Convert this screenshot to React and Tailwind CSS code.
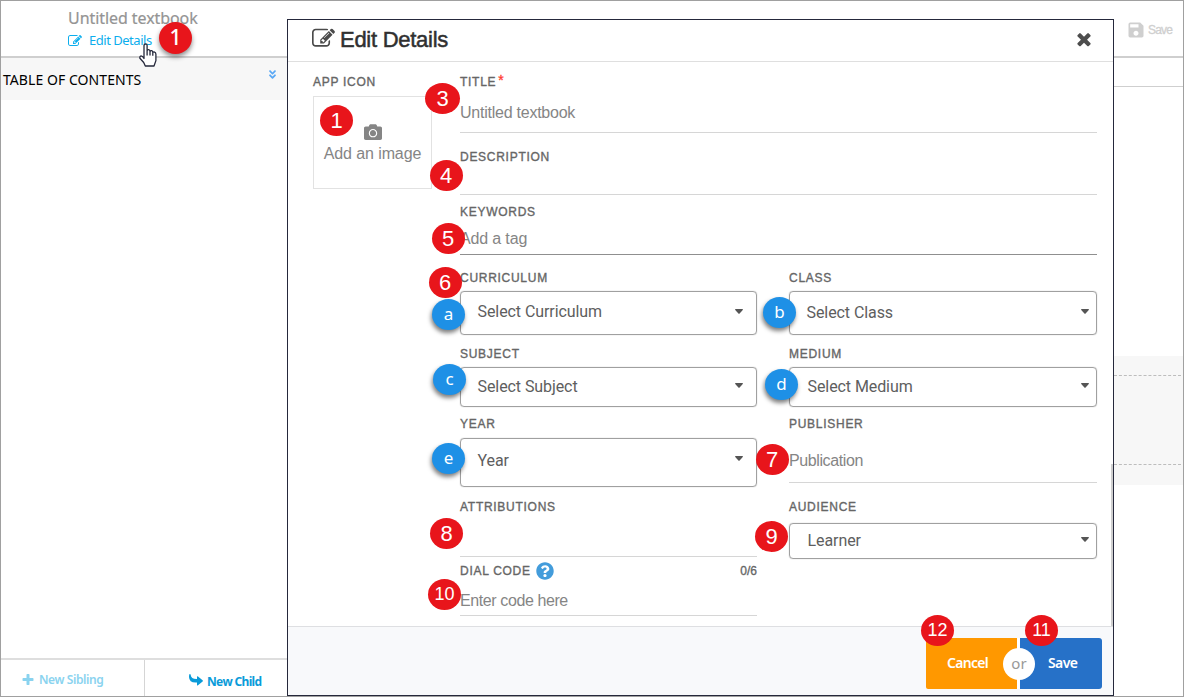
import React from "react";
import { FaCamera, FaQuestionCircle, FaAngleDoubleDown } from "react-icons/fa";
import { MdSave } from "react-icons/md";

const ARIAL = "font-['Liberation_Sans',Arial,sans-serif]";
const ROBOTO = "font-['Roboto',sans-serif]";
const NOTO = "font-['Noto_Sans',sans-serif]";

function Fa({ d, className }) {
  return (
    <svg viewBox="0 0 1792 1792" fill="currentColor" className={className}>
      <path d={d} />
    </svg>
  );
}

const EDIT =
  "M888 1184l116-116-152-152-116 116v56h96v96h56zm440-720q-16-16-33 1l-350 350q-17 17-1 33t33-1l350-350q17-17 1-33zm80 594v190q0 119-84.5 203.5t-203.5 84.5h-832q-119 0-203.5-84.5t-84.5-203.5v-832q0-119 84.5-203.5t203.5-84.5h832q63 0 117 25 15 7 18 23 3 17-9 29l-49 49q-14 14-32 8-23-6-45-6h-832q-66 0-113 47t-47 113v832q0 66 47 113t113 47h832q66 0 113-47t47-113v-126q0-13 9-22l64-64q15-15 35-7t20 29zm-96-738l288 288-672 672h-288v-288zm444 132l-92 92-288-288 92-92q28-28 68-28t68 28l152 152q28 28 28 68t-28 68z";
const TIMES =
  "M1490 1322q0 40-28 68l-136 136q-28 28-68 28t-68-28l-294-294-294 294q-28 28-68 28t-68-28l-136-136q-28-28-28-68t28-68l294-294-294-294q-28-28-28-68t28-68l136-136q28-28 68-28t68 28l294 294 294-294q28-28 68-28t68 28l136 136q28 28 28 68t-28 68l-294 294 294 294q28 28 28 68z";
const PLUS =
  "M1600 736v192q0 40-28 68t-68 28h-416v416q0 40-28 68t-68 28h-192q-40 0-68-28t-28-68v-416h-416q-40 0-68-28t-28-68v-192q0-40 28-68t68-28h416v-416q0-40 28-68t68-28h192q40 0 68 28t28 68v416h416q40 0 68 28t28 68z";

function Label({ children, className = "tracking-[0.72px]" }) {
  return (
    <div className={`flex h-4 shrink-0 items-center whitespace-nowrap text-[12px] text-[#666] [-webkit-text-stroke:0.35px_#666] ${ARIAL} ${className}`}>
      {children}
    </div>
  );
}

function LineField({ label, labelClass, className, line = "border-[#d6d6d6]", text, textClass = "" }) {
  return (
    <div className={`flex flex-col border-b ${line} ${className}`}>
      <Label className={labelClass}>{label}</Label>
      {text && (
        <div className={`whitespace-nowrap text-[16px] leading-5 text-[#858585] ${ARIAL} ${textClass}`}>{text}</div>
      )}
    </div>
  );
}

function SelectField({ label, labelClass, className, boxClass, value, valueClass = "", caretClass = "" }) {
  return (
    <div className={className}>
      <Label className={labelClass}>{label}</Label>
      <div className={`flex justify-between rounded-[4px] border border-[#a0a0a0] pl-[16.5px] shadow-[0_0_1px_#a0a0a0] ${boxClass}`}>
        <span className={`whitespace-nowrap text-[16px] leading-5 tracking-[-0.08px] text-[#5e5e5e] ${ROBOTO} ${valueClass}`}>{value}</span>
        <svg viewBox="0 0 8 5" className={`h-[5px] w-2 fill-[#555] ${caretClass}`}>
          <path d="M0 .8Q0 0 .8 0H7.2Q8 0 8 .8L4.6 4.6Q4 5 3.4 4.6Z" />
        </svg>
      </div>
    </div>
  );
}

function Badge({ children, className }) {
  return (
    <div className={`absolute flex h-[31px] w-[33px] items-center justify-center rounded-[50%] bg-[#e8151b] text-white ${ARIAL} ${className}`}>
      {children}
    </div>
  );
}

function BlueBadge({ children, className }) {
  return (
    <div className={`absolute flex h-[31px] w-[33px] items-center justify-center rounded-[50%] bg-[#1e90e6] pb-0.5 text-[17px] text-white shadow-[-1px_3px_4px_rgba(0,0,0,0.5)] ${NOTO} ${className}`}>
      {children}
    </div>
  );
}

function Sidebar() {
  return (
    <aside className={`flex w-[286px] shrink-0 flex-col ${NOTO}`}>
      <div className="h-[55px] pl-[67px] pt-[6px]">
        <div className="whitespace-nowrap text-[16px] leading-[22px] tracking-[-0.07px] text-[#949494] [-webkit-text-stroke:0.2px_#949494]">Untitled textbook</div>
        <div className="mt-[2px] flex h-5 items-center text-[#0caeed]">
          <Fa d={EDIT} className="size-[14px]" />
          <span className="ml-[7px] text-[13px] tracking-[-0.48px]">Edit Details</span>
        </div>
      </div>
      <div className="flex h-[44px] justify-between border-t-2 border-[#cfcfcf] bg-[#f7f7f7] pl-[2px] pr-[9px]">
        <span className="mt-[11px] text-[14px] leading-[22px] tracking-[0.06px] text-black">TABLE OF CONTENTS</span>
        <FaAngleDoubleDown className="mt-[11px] size-[11px] text-[#5aa8f5]" />
      </div>
      <div className="flex-1" />
      <div className="flex h-[38px] border-t-2 border-[#dedede] text-[12px] font-semibold">
        <div className="flex w-[144px] items-center border-r border-[#d5d5d5] pl-[20px] pt-[3px] text-[#8ad3ef]">
          <Fa d={PLUS} className="size-[14px]" />
          <span className="ml-[4px] whitespace-nowrap tracking-[-0.4px]">New Sibling</span>
        </div>
        <div className="flex flex-1 items-center pl-[44px] pt-[7px] text-[#0a9bd9]">
          <svg viewBox="0 0 14 12" className="mb-1 h-3 w-[14px] fill-current">
            <path d="M.4.3Q1-.4 1.6.5Q2 5.2 8 5V2.6Q8.2 1.8 9 2.4L13.6 6.3Q14.2 6.9 13.6 7.5L9 11.3Q8.2 11.9 8 11V8.5Q.2 9.2 0 3Q0 1.2.4.3Z" />
          </svg>
          <span className="ml-[4px] whitespace-nowrap font-bold tracking-[-0.65px]">New Child</span>
        </div>
      </div>
    </aside>
  );
}

function Modal() {
  return (
    <section className="mt-[18px] flex h-[677px] w-[827px] shrink-0 flex-col border border-[#25283b] bg-white">
      <header className="flex h-[42px] items-center justify-between border-b border-[#dfdfdf] pl-6 pr-[19px] text-[#303030]">
        <div className="flex items-center">
          <Fa d={EDIT} className="mb-[4px] size-[23px] text-[#4a4a4a]" />
          <h1 className={`ml-[5px] mb-[3px] whitespace-nowrap text-[22px] tracking-[-0.27px] [-webkit-text-stroke:0.5px_#303030] ${ARIAL}`}>Edit Details</h1>
        </div>
        <Fa d={TIMES} className="mb-[4px] size-[20px] text-[#4d4d4d]" />
      </header>

      <div className="relative flex h-[564px] pl-[25px] pt-[12px]">
        <div className="w-[119px]">
          <Label>APP ICON</Label>
          <div className="mt-[6px] flex h-[93px] flex-col items-center border border-[#e2e2e2] pt-[26px] text-[#858585]">
            <FaCamera className="size-[18px]" />
            <span className={`mt-[3px] whitespace-nowrap text-[16px] leading-5 tracking-[-0.1px] ${ARIAL}`}>Add an image</span>
          </div>
        </div>

        <div className="ml-[28px] w-[637px]">
          <LineField className="h-[59px]" label={<>TITLE<span className="mb-1 ml-[2px] text-[14px] text-[#ff3b30] [-webkit-text-stroke:0.3px_#ff3b30]">*</span></>} text="Untitled textbook" textClass="mt-[13px] tracking-[-0.24px]" />
          <LineField className="mt-4 h-[46px]" label="DESCRIPTION" />
          <LineField className="mt-[9px] h-[51px]" line="border-[#8f8f8f]" label="KEYWORDS" text="Add a tag" textClass="mt-[9px] tracking-[-0.15px]" />

          <div className="mt-[15px] flex gap-8">
            <div className="w-[297px]">
              <SelectField className="h-[65px]" label="CURRICULUM" boxClass="mt-[5px] h-[44px] pr-[13px]" value="Select Curriculum" valueClass="mt-[10px]" caretClass="mt-[17px]" />
              <SelectField className="mt-[11px] h-[61px]" label="SUBJECT" boxClass="mt-[5px] h-[40px] pr-[13px]" value="Select Subject" valueClass="mt-[9px]" caretClass="mt-[15px]" />
              <SelectField className="mt-[9px] h-[71px]" label="YEAR" boxClass="mt-[6px] h-[49px] pr-[13px]" value="Year" valueClass="mt-[12px]" caretClass="mt-[17px]" />
              <LineField className="mt-3 h-[58px]" label="ATTRIBUTIONS" />
              <LineField
                className="mt-[6px] h-[53px]"
                label={<><span>DIAL CODE</span><FaQuestionCircle className="mb-px ml-[5.5px] size-[18px] stroke-none text-[#439cdb]" /><span className="ml-auto tracking-[0px]">0/6</span></>}
                text="Enter code here"
                textClass="mt-[12px] tracking-[-0.4px]"
              />
            </div>
            <div className="w-[308px]">
              <SelectField className="h-[65px]" label="CLASS" boxClass="mt-[5px] h-[44px] pr-[7px]" value="Select Class" valueClass="mt-[11px]" caretClass="mt-[17px]" />
              <SelectField className="mt-[11px] h-[61px]" label="MEDIUM" boxClass="mt-[5px] h-[40px] pr-[7px]" value="Select Medium" valueClass="ml-px mt-[9px]" caretClass="mt-[15px]" />
              <LineField className="mt-[9px] h-[67px]" label="PUBLISHER" text="Publication" textClass="mt-[19px] tracking-[-0.4px]" />
              <SelectField className="mt-[16px] h-[60px]" label="AUDIENCE" boxClass="mt-[8px] h-[36px] pr-[7px]" value="Learner" valueClass="ml-px mt-[7px]" caretClass="mt-[13px]" />
            </div>
          </div>
        </div>
        <div className="absolute bottom-0 right-0 h-[162px] w-[2px] bg-[#cfcfcf]" />
      </div>

      <footer className={`flex flex-1 justify-end border-t border-[#dedfe2] bg-[#f8f9fb] pr-[11px] pt-[11px] ${NOTO}`}>
        <div className="relative flex h-[51px] gap-[3px] bg-white text-[14px] font-semibold text-white">
          <div className="flex w-[91px] items-center rounded-l-[2px] bg-[#ff9800] pb-[2px] pl-[21px] tracking-[-0.7px]">Cancel</div>
          <div className="flex w-[82px] items-center rounded-r-[3px] bg-[#2671c8] pb-[2px] pl-[28px] tracking-[-0.6px]">Save</div>
          <div className="absolute left-[77px] top-[10px] flex h-8 w-[32px] items-center justify-center rounded-full bg-white pb-px text-[15px] font-normal text-[#999]">or</div>
        </div>
      </footer>
    </section>
  );
}

function RightStrip() {
  return (
    <aside className="flex flex-1 flex-col">
      <div className={`flex h-[57px] items-center border-b-2 border-[#cfcfcf] pl-[12px] pt-[2px] text-[#cfcfcf] ${ARIAL}`}>
        <MdSave className="size-[20px]" />
        <span className="ml-[2px] mt-px text-[12px] tracking-[-0.8px] [-webkit-text-stroke:0.3px_#cfcfcf]">Save</span>
      </div>
      <div className="h-[29px] border-b border-[#cfcfcf]" />
      <div className="mt-[269px] h-[129px] bg-[#f7f7f7] pt-[19px]">
        <div className="mr-[2px] h-[90px] border-y border-dashed border-[#bdbdbd]" />
      </div>
    </aside>
  );
}

export default function App() {
  return (
    <main className="relative flex h-[697px] w-[1184px] overflow-hidden border border-[#a0a0a0] bg-white">
      <Sidebar />
      <Modal />
      <RightStrip />

      <Badge className="left-[158px] top-[21px] h-[32px] pb-px text-[21px] shadow-[0_3px_5px_rgba(0,0,0,0.45)]"><span className="font-['Noto_Sans',sans-serif] font-medium">1</span></Badge>
      <svg viewBox="0 0 18 24" className="absolute left-[138px] top-[42px] h-6 w-[18px]" fill="#fff" stroke="#25283b" strokeWidth="1.3" strokeLinejoin="round">
        <path d="M5 15.5V2.8Q5 1 6.6 1T8.1 2.8V8Q8.3 6.6 9.6 6.7 11 6.8 11 8.5 11.4 7.4 12.6 7.6 13.8 7.8 13.8 9.5 14.5 8.7 15.6 9.1 16.9 9.6 16.9 11.2V17.6L15 23H6.3L4.7 19.5.9 15.3Q.5 13.3 2.1 12.9 3.4 12.9 5 15.5ZM8.1 8V12.5M11 8.5V12.5M13.8 9.5V12.8" />
      </svg>

      <Badge className="left-[319px] top-[104px] text-[22px]">1</Badge>
      <Badge className="left-[424px] top-[82px] w-[35px] text-[22px]">3</Badge>
      <Badge className="left-[429px] top-[159px] pr-px text-[22px]">4</Badge>
      <Badge className="left-[431px] top-[222px] pr-px text-[22px]">5</Badge>
      <Badge className="left-[428px] top-[266px] pr-px text-[22px]">6</Badge>
      <Badge className="left-[755px] top-[443px] pr-px text-[22px]">7</Badge>
      <Badge className="left-[429px] top-[517px] w-[32px] text-[22px]">8</Badge>
      <Badge className="left-[754px] top-[520px] w-[32px] text-[22px]">9</Badge>
      <Badge className="left-[427px] top-[578px] w-[32px] text-[18px]">10</Badge>
      <Badge className="left-[1024px] top-[614px] w-[32px] pb-px text-[18px]">11</Badge>
      <Badge className="left-[920px] top-[614px] w-[32px] text-[18px]">12</Badge>
      <BlueBadge className="left-[431px] top-[298px]">a</BlueBadge>
      <BlueBadge className="left-[762px] top-[296px]">b</BlueBadge>
      <BlueBadge className="left-[432px] top-[363px]">c</BlueBadge>
      <BlueBadge className="left-[764px] top-[368px]">d</BlueBadge>
      <BlueBadge className="left-[431px] top-[442px]">e</BlueBadge>
    </main>
  );
}
